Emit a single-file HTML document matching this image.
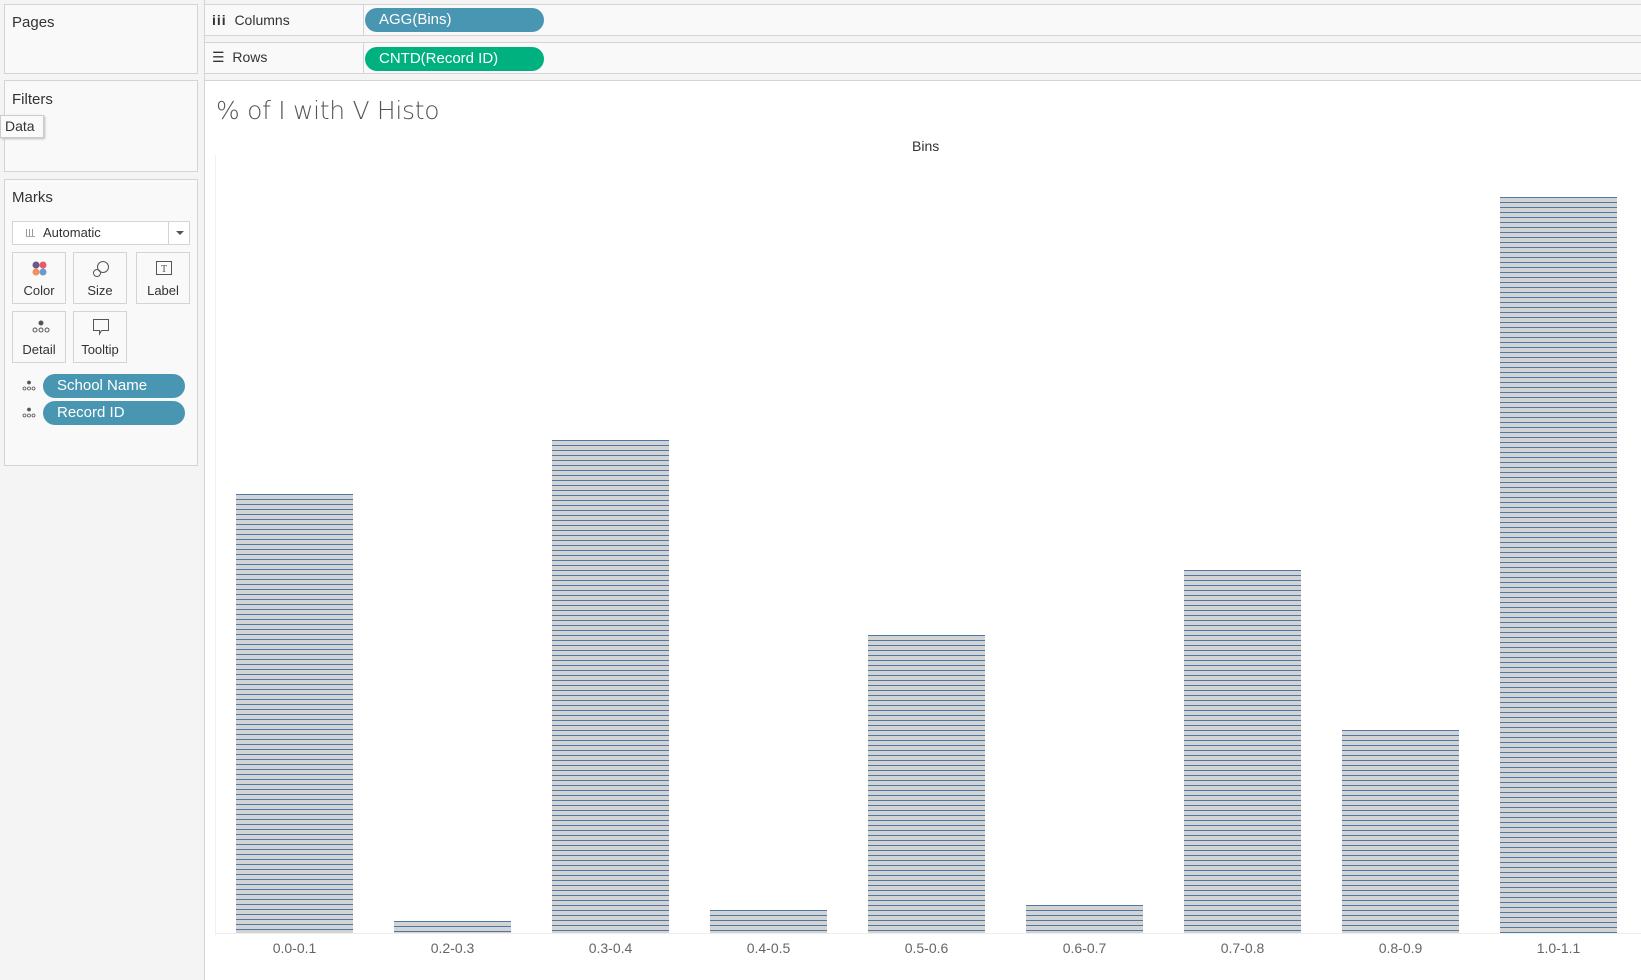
<!DOCTYPE html>
<html><head><meta charset="utf-8"><style>
*{box-sizing:border-box;margin:0;padding:0}
body{width:1641px;height:968px;background:#f4f4f4;font-family:"Liberation Sans",sans-serif;color:#333;position:relative;overflow:hidden}
.abs{position:absolute}
.box{position:absolute;background:#f9f9f9;border:1px solid #d4d4d4}
.t{position:absolute;font-size:15px;color:#333}
.btn{position:absolute;width:54px;height:52px;border:1px solid #d4d4d4;background:#f9f9f9;font-size:13px;text-align:center}
.btn span{position:absolute;left:0;right:0;bottom:5px}
.btn svg{left:18px!important}
.pill{position:absolute;height:24px;border-radius:12px;color:#fff;font-size:15px;line-height:24px;padding-left:14px}
.bar{position:absolute;width:119px;background:#d3d3d3 repeating-linear-gradient(to bottom,#4e79a7 0,#4e79a7 1px,transparent 1px,transparent 5px);background-origin:content-box;background-clip:content-box;padding:3px 1px 0 1px;bottom:35px;background-color:#d3d3d3}
.lbl{position:absolute;top:940px;width:119px;text-align:center;font-size:14px;color:#666}
</style></head><body>
<div class="box" style="left:4px;top:4px;width:194px;height:70px"></div>
<div class="t" style="left:12px;top:14px">Pages</div>
<div class="box" style="left:4px;top:80px;width:194px;height:92px"></div>
<div class="t" style="left:12px;top:91px">Filters</div>
<div class="abs" style="left:0;top:115px;width:44px;height:23px;background:#fafafa;border:1px solid #ccc;box-shadow:1px 1px 2px #bbb;font-size:14px;line-height:21px;padding-left:4px">Data</div>
<div class="box" style="left:4px;top:179px;width:194px;height:287px"></div>
<div class="t" style="left:12px;top:189px">Marks</div>
<div class="abs" style="left:12px;top:221px;width:178px;height:24px;border:1px solid #d4d4d4;background:#fff;font-size:13px;line-height:22px;padding-left:30px">Automatic
 <div class="abs" style="left:13px;top:7px;width:9px;height:8px;border-bottom:1px solid #aaa;background:repeating-linear-gradient(to right,#999 0 1px,transparent 1px 3px)"></div>
 <div class="abs" style="left:155px;top:0;width:1px;height:22px;background:#d4d4d4"></div>
 <div class="abs" style="left:163px;top:9px;border:4px solid transparent;border-top:4px solid #555"></div>
</div>
<div class="btn" style="left:12px;top:252px"><svg class="abs" style="left:16px;top:7px" width="18" height="18"><circle cx="5" cy="5" r="3.5" fill="#6a5a8a"/><circle cx="12" cy="5" r="3.5" fill="#e85a6a"/><circle cx="5" cy="12" r="3.5" fill="#f0905a"/><circle cx="12" cy="12" r="3.5" fill="#6a9ad0"/></svg><span>Color</span></div>
<div class="btn" style="left:73px;top:252px"><svg class="abs" style="left:16px;top:7px" width="18" height="18" fill="none" stroke="#555"><circle cx="11" cy="7" r="5.5"/><circle cx="5" cy="13" r="3.5"/></svg><span>Size</span></div>
<div class="btn" style="left:136px;top:252px"><svg class="abs" style="left:16px;top:7px" width="18" height="18" fill="none" stroke="#555"><rect x="1.5" y="1.5" width="15" height="13"/><text x="9" y="12" font-size="10" text-anchor="middle" fill="#555" stroke="none" font-family="Liberation Serif">T</text></svg><span>Label</span></div>
<div class="btn" style="left:12px;top:311px"><svg class="abs" style="left:15px;top:8px" width="20" height="14" fill="none" stroke="#555"><circle cx="10" cy="3" r="2" fill="#555"/><circle cx="4" cy="10" r="2"/><circle cx="10" cy="10" r="2"/><circle cx="16" cy="10" r="2"/></svg><span>Detail</span></div>
<div class="btn" style="left:73px;top:311px"><svg class="abs" style="left:16px;top:6px" width="18" height="18" fill="none" stroke="#555"><path d="M1.5 1.5h15v11h-7l-2 3.5v-3.5h-6z"/></svg><span>Tooltip</span></div>
<svg class="abs" style="left:22px;top:380px" width="14" height="12" fill="none" stroke="#555" stroke-width=".8"><circle cx="7" cy="2.5" r="1.5" fill="#555"/><circle cx="2.5" cy="8.5" r="1.5"/><circle cx="7" cy="8.5" r="1.5"/><circle cx="11.5" cy="8.5" r="1.5"/></svg>
<svg class="abs" style="left:22px;top:407px" width="14" height="12" fill="none" stroke="#555" stroke-width=".8"><circle cx="7" cy="2.5" r="1.5" fill="#555"/><circle cx="2.5" cy="8.5" r="1.5"/><circle cx="7" cy="8.5" r="1.5"/><circle cx="11.5" cy="8.5" r="1.5"/></svg>
<div class="pill" style="left:43px;top:374px;width:142px;background:#4996b2">School Name</div>
<div class="pill" style="left:43px;top:401px;width:142px;background:#4996b2">Record ID</div>
<div class="abs" style="left:204px;top:0;width:1px;height:968px;background:#d4d4d4"></div>
<div class="box" style="left:204px;top:4px;width:1450px;height:32px"></div>
<div class="abs" style="left:363px;top:5px;width:1px;height:30px;background:#d4d4d4"></div>
<div class="t" style="left:212px;top:12px;font-size:14px"><b style="font-weight:bold;letter-spacing:1px">iii</b>&nbsp; Columns</div>
<div class="pill" style="left:365px;top:8px;width:179px;background:#4996b2">AGG(Bins)</div>
<div class="box" style="left:204px;top:42px;width:1450px;height:32px"></div>
<div class="abs" style="left:363px;top:43px;width:1px;height:30px;background:#d4d4d4"></div>
<div class="t" style="left:212px;top:49px;font-size:14px">☰&nbsp; Rows</div>
<div class="pill" style="left:365px;top:47px;width:179px;background:#00b180">CNTD(Record ID)</div>
<div class="abs" style="left:204px;top:80px;width:1450px;height:900px;background:#fff;border-left:1px solid #d4d4d4;border-top:1px solid #d4d4d4"></div>
<div class="abs" style="left:216px;top:96px;font-size:25px;color:#555;font-family:'DejaVu Sans',sans-serif;font-weight:200;letter-spacing:-.3px">% of I with V Histo</div>
<div class="abs" style="left:912px;top:138px;font-size:14px;color:#333">Bins</div>
<div class="abs" style="left:215px;top:155px;width:1px;height:780px;background:#f0f0f0"></div>
<div class="abs" style="left:215px;top:933px;width:1426px;height:1px;background:#eee"></div>
<div class="bar" style="left:235px;top:491px"></div>
<div class="bar" style="left:393px;top:918px"></div>
<div class="bar" style="left:551px;top:437px"></div>
<div class="bar" style="left:709px;top:907px"></div>
<div class="bar" style="left:867px;top:632px"></div>
<div class="bar" style="left:1025px;top:902px"></div>
<div class="bar" style="left:1183px;top:567px"></div>
<div class="bar" style="left:1341px;top:727px"></div>
<div class="bar" style="left:1499px;top:194px"></div>
<div class="lbl" style="left:235px">0.0-0.1</div>
<div class="lbl" style="left:393px">0.2-0.3</div>
<div class="lbl" style="left:551px">0.3-0.4</div>
<div class="lbl" style="left:709px">0.4-0.5</div>
<div class="lbl" style="left:867px">0.5-0.6</div>
<div class="lbl" style="left:1025px">0.6-0.7</div>
<div class="lbl" style="left:1183px">0.7-0.8</div>
<div class="lbl" style="left:1341px">0.8-0.9</div>
<div class="lbl" style="left:1499px">1.0-1.1</div>
</body></html>
